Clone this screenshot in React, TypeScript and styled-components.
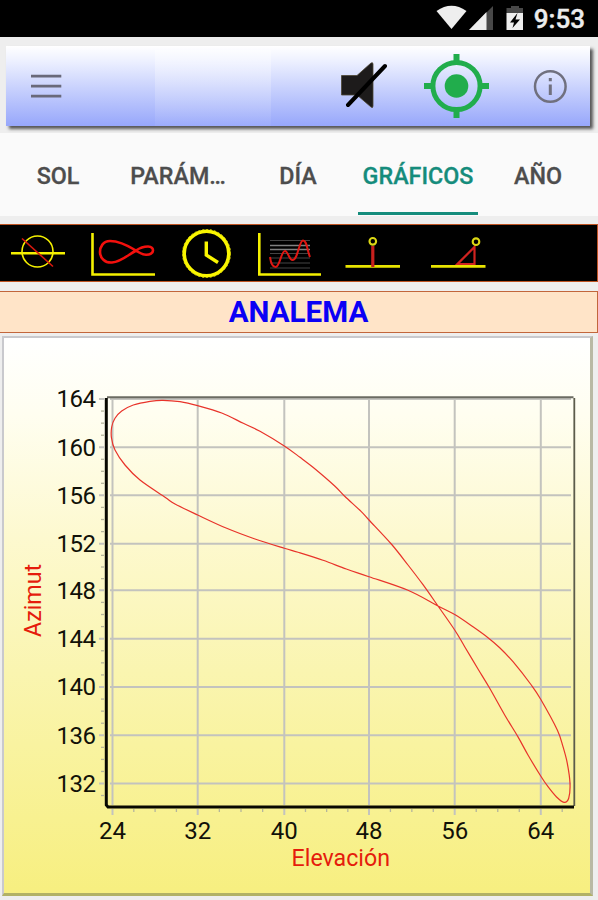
import React from "react";
import styled, { createGlobalStyle } from "styled-components";

const GlobalStyle = createGlobalStyle`
  * { box-sizing: border-box; }
  body { margin: 0; background: #eeeeee; font-family: Roboto, sans-serif; }
`;

const Screen = styled.div`
  width: 598px;
  height: 900px;
  overflow: hidden;
  display: flex;
  flex-direction: column;
  background: #eeeeee;
`;

const StatusBar = styled.header`
  height: 37px;
  flex: none;
  background: #000;
  display: flex;
  justify-content: flex-end;
  align-items: center;
  padding-right: 13px;
`;

const StatusIcons = styled.svg`
  width: 90px;
  height: 37px;
  margin-right: 8px;
`;

const Clock = styled.span`
  color: #ececec;
  font-size: 26px;
  font-weight: 500;
  line-height: 38px;
  -webkit-text-stroke: 0.4px #ececec;
`;

const Header = styled.div`
  flex: none;
  height: 96px;
  padding: 9px 8px 0 6px;
`;

const Toolbar = styled.div`
  height: 80px;
  display: flex;
  align-items: center;
  background: linear-gradient(#ffffff 0%, #eff2ff 17%, #c8d1fd 53%, #97a7fb 100%);
  box-shadow: 3px 3px 3px #555;
`;

const ToolbarIcon = styled.svg<{ $w: number; $left: number }>`
  width: ${(p) => p.$w}px;
  height: 80px;
  margin-left: ${(p) => p.$left}px;
  flex: none;
`;

const LogoSpace = styled.div`
  width: 116px;
  height: 76px;
  margin-left: 93px;
  align-self: flex-end;
  background: linear-gradient(#ffffff66, #ffffff33 50%, #ffffff0c);
  flex: none;
`;

const Tabs = styled.nav`
  flex: none;
  height: 83px;
  background: #fafafa;
  display: flex;
  justify-content: center;
  padding-right: 2px;
`;

const Tab = styled.div<{ $active?: boolean }>`
  flex: 0 0 120px;
  display: flex;
  justify-content: center;
  padding-top: 29px;
  font-size: 23.3px;
  line-height: 28px;
  font-weight: 500;
  color: ${(p) => (p.$active ? "#158c7c" : "#4d4d4d")};
  -webkit-text-stroke: 0.3px ${(p) => (p.$active ? "#158c7c" : "#4d4d4d")};
  background: ${(p) =>
    p.$active ? "linear-gradient(#158c7c, #158c7c) 50% 79px / 120px 3px no-repeat" : "none"};
`;

const IconStrip = styled.div`
  flex: none;
  height: 58px;
  margin-top: 8px;
  background: #000;
  border: 1.5px solid #bf5423;
  border-left: 0;
`;

const StripDrawing = styled.svg`
  display: block;
  width: 596px;
  height: 55px;
`;

const Title = styled.h1`
  flex: none;
  height: 42px;
  margin: 9px 0 0;
  border: 1.5px solid #c2663c;
  border-left: 0;
  background: #ffe4c8;
  color: #0b00f5;
  font-size: 29.6px;
  font-weight: 700;
  line-height: 40px;
  text-align: center;
`;

const ChartPanel = styled.section`
  flex: none;
  width: 591px;
  height: 560px;
  margin: 3px 0 0 2px;
  border-style: solid;
  border-width: 2px 3px 3px 2px;
  border-color: #c9c9cd #b9b9a4 #b1b165 #c9c9cd;
  background: linear-gradient(#ffffff 0%, #fffef0 14%, #fdf9cf 36%, #faf5b0 60%, #f7ef80 100%);
`;

const Plot = styled.svg`
  display: block;
  width: 586px;
  height: 555px;
  font-family: Roboto, sans-serif;
`;

const GRID_X = [112.5, 197.7, 284.3, 369, 454.7, 540.8];
const GRID_Y = [399, 447.3, 495.3, 543.7, 590.3, 638.7, 687, 735.3, 783.5];

const CURVE: [number, number][] = [
  [111.7, 427], [115, 418.3], [121.7, 411], [133.3, 405], [150, 401.3], [163, 400.3],
  [180, 401.7], [197.7, 405.7], [221.7, 413], [243.3, 423.3], [260, 431.3], [284.3, 446],
  [300, 457.3], [313, 467.3], [334.7, 486], [344.7, 496.2], [361.3, 511.6], [369, 520],
  [391.3, 544], [408, 565], [423, 584.7], [438, 606], [454.7, 630], [464.7, 646.7],
  [478, 669], [489.7, 688.3], [504.7, 715], [518, 736.9], [528, 755], [540.7, 776],
  [548, 786.7], [556.3, 796.7], [564, 802.3], [568.7, 798.3], [570, 783.3], [567.3, 763.3],
  [563, 746.7], [557.3, 730], [540.7, 699.3], [531.3, 685], [513, 661.7], [499.7, 647.7],
  [488, 637.7], [473, 626.8], [454.7, 614.6], [438, 606], [408, 590.3], [369, 576.7],
  [346.3, 569], [323, 560.3], [298, 552.3], [284.3, 548.3], [255, 539], [226.7, 528.3],
  [197.7, 515], [175, 504], [165, 497.2], [140, 480], [125, 465], [115, 450], [111.5, 438],
];

function smoothClosedPath(pts: [number, number][]) {
  const n = pts.length;
  let d = `M${pts[0][0]} ${pts[0][1]}`;
  for (let i = 0; i < n; i++) {
    const a = pts[(i + n - 1) % n];
    const b = pts[i];
    const c = pts[(i + 1) % n];
    const e = pts[(i + 2) % n];
    d += `C${b[0] + (c[0] - a[0]) / 6} ${b[1] + (c[1] - a[1]) / 6} ${c[0] - (e[0] - b[0]) / 6} ${
      c[1] - (e[1] - b[1]) / 6
    } ${c[0]} ${c[1]}`;
  }
  return d + "Z";
}

const minorTicks = (grid: number[], step: number, max: number) =>
  grid
    .flatMap((g, i) => {
      const next = grid[i + 1] ?? g + step * 4;
      return [1, 2, 3].map((k) => g + ((next - g) * k) / 4);
    })
    .filter((v) => v < max);

function AnalemmaChart() {
  return (
    <Plot viewBox="4 338 586 555">
      <g stroke="#c3c3be" strokeWidth="2">
        {GRID_X.map((x) => (
          <path key={x} d={`M${x} 399V805M${x} 809V815`} />
        ))}
        {GRID_Y.map((y) => (
          <path key={y} d={`M99 ${y}H104M110 ${y}H571`} />
        ))}
      </g>
      <g stroke="#b5b59c" strokeWidth="1.3">
        {minorTicks(GRID_X, 21.4, 570).map((x) => (
          <path key={x} d={`M${x} 809V812`} />
        ))}
        {minorTicks(GRID_Y, 12, 800).map((y) => (
          <path key={y} d={`M101 ${y}H104`} />
        ))}
      </g>
      <path d="M107 397.3H573.5" stroke="#6b6b62" strokeWidth="2" />
      <path d="M574.3 398V806" stroke="#5c5c4b" strokeWidth="1.8" />
      <path d="M106.3 398V805L108 807H574" fill="none" stroke="#080800" strokeWidth="3" />
      <path d={smoothClosedPath(CURVE)} fill="none" stroke="#e8332a" strokeWidth="1.2" />
      <g fill="#111108" fontSize="24" textAnchor="end">
        {GRID_Y.map((y, i) => (
          <text key={y} x="96" y={y + 8.3} textLength="39.5">
            {164 - i * 4}
          </text>
        ))}
      </g>
      <g fill="#111108" fontSize="24" textAnchor="middle">
        {GRID_X.map((x, i) => (
          <text key={x} x={x} y="839">
            {24 + i * 8}
          </text>
        ))}
      </g>
      <g fill="#e51c0c" fontSize="23.2" textAnchor="middle">
        <text x="340.8" y="865.5">Elevación</text>
        <text transform="translate(41 600.5) rotate(-90)">Azimut</text>
      </g>
    </Plot>
  );
}

function ChartPicker() {
  return (
    <StripDrawing viewBox="0 225 596 55" fill="none">
      <g stroke="#f4f000" strokeWidth="1.6">
        <path d="M11 253.3H65" strokeWidth="2.4" />
        <circle cx="37.5" cy="251.5" r="15.5" />
        <path d="M22 238.5L53 266.5" stroke="#d8180f" />
      </g>
      <path d="M92.5 233V274.5H155" stroke="#f4f000" strokeWidth="2.6" />
      <path
        d="M136 250.5C127 245 119 241 110 241C103 241 100 247 100 252C100 258 105 263 112 262.5C121 262 128 255 136 250.5C141 247 145 246.5 148 246.5C152 246.5 153 249 153 250.5C153 253 150 255 146 254.8C142 254.5 139 252.5 136 250.5Z"
        stroke="#f3100d"
        strokeWidth="2.6"
      />
      <circle cx="206.5" cy="253.5" r="22.3" stroke="#faf600" strokeWidth="3.6" />
      <circle cx="206.5" cy="253.5" r="24" stroke="#d8d400" strokeWidth="1" strokeDasharray="2 2" />
      <path d="M206.3 241.5V255L218 262.5" stroke="#faf600" strokeWidth="3.4" />
      <path d="M259.3 233V274.5H321" stroke="#f4f000" strokeWidth="2.6" />
      <g stroke="#444" strokeWidth="1.4">
        <path d="M270 240.5H310M270 253.5H310M270 258H310M270 263H310M270 268H310" strokeWidth="1" />
        <path d="M270 245.5H310M270 249.5H310" stroke="#808080" />
      </g>
      <path
        d="M270 257C271 264 273 267 275.5 267C280 267 281 251 285 251C288 251 289 260 292.5 260C298 260 299 240.5 303 240.5C307 240.5 307 250 310 257"
        stroke="#df1712"
        strokeWidth="2"
      />
      <path d="M345.5 266.3H400M431 266.3H485.5" stroke="#e8e400" strokeWidth="2.8" />
      <path d="M372.8 246V267" stroke="#c8201d" strokeWidth="3.2" />
      <circle cx="372.8" cy="241.3" r="3.3" stroke="#dcd814" strokeWidth="2.1" />
      <path d="M474.5 247V264H457.5Z" stroke="#d02320" strokeWidth="2.2" />
      <circle cx="476" cy="241.7" r="3.3" stroke="#dcd814" strokeWidth="2.1" />
    </StripDrawing>
  );
}

export default function App() {
  return (
    <>
      <GlobalStyle />
      <Screen>
        <StatusBar>
          <StatusIcons viewBox="434 0 90 37">
            <path d="M434.5 11Q449.5 0.5 464.5 11L449.5 29Z" fill="#eee" />
            <path d="M491 6V30H467Z" fill="#484848" />
            <path d="M484.5 12V30H467Z" fill="#eee" />
            <path d="M504.5 13V8H509V6H517V8H521V13Z" fill="#484848" />
            <path d="M504.5 13H521V30H504.5Z" fill="#eee" />
            <path d="M515.5 13L508 22.5H512L510.5 28L518 19.5H513.5Z" fill="#000" />
          </StatusIcons>
          <Clock>9:53</Clock>
        </StatusBar>
        <Header>
          <Toolbar>
            <ToolbarIcon $w={32} $left={24} viewBox="30 46 32 80">
              <path d="M31 76.2H61.3M31 86.2H61.3M31 96.2H61.3" stroke="#69697a" strokeWidth="2.7" />
            </ToolbarIcon>
            <LogoSpace />
            <ToolbarIcon $w={48} $left={68} viewBox="339 46 48 80">
              <path
                d="M341.5 75.5H357L371 63Q373 62 373 64V106Q373 108.500 371 107L357 95H341.5Z"
                fill="#1d1b1b"
                stroke="#4c4634"
                strokeWidth="0.8"
              />
              <path d="M348 105L385 66" stroke="#000" strokeWidth="4" strokeLinecap="round" />
            </ToolbarIcon>
            <ToolbarIcon $w={66} $left={37} viewBox="424 46 66 80">
              <circle cx="456.5" cy="86" r="23.6" fill="none" stroke="#21ad4c" strokeWidth="5" />
              <circle cx="456.5" cy="86" r="11.8" fill="#21ad4c" />
              <path
                d="M456.5 54V62M456.5 110V118M424 86H432M481 86H489"
                stroke="#21ad4c"
                strokeWidth="6"
              />
            </ToolbarIcon>
            <ToolbarIcon $w={36} $left={43} viewBox="533 46 36 80">
              <circle cx="550.3" cy="86.5" r="15.3" fill="none" stroke="#70707e" strokeWidth="2.5" />
              <path d="M550.3 84.5V95M550.3 78V81.3" stroke="#70707e" strokeWidth="3" />
            </ToolbarIcon>
          </Toolbar>
        </Header>
        <Tabs>
          <Tab>SOL</Tab>
          <Tab>PARÁM…</Tab>
          <Tab>DÍA</Tab>
          <Tab $active>GRÁFICOS</Tab>
          <Tab>AÑO</Tab>
        </Tabs>
        <IconStrip>
          <ChartPicker />
        </IconStrip>
        <Title>ANALEMA</Title>
        <ChartPanel>
          <AnalemmaChart />
        </ChartPanel>
      </Screen>
    </>
  );
}
